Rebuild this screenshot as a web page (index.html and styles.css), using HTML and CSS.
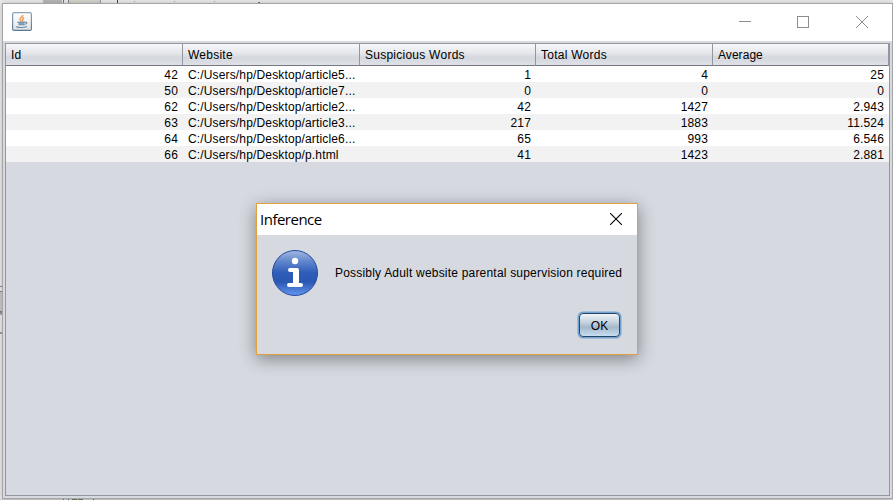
FILE: index.html
```html
<!DOCTYPE html>
<html lang="en">
<head>
<meta charset="utf-8">
<title>Inference</title>
<link rel="stylesheet" href="styles.css">
</head>
<body>
<svg class="backdrop" width="893" height="500" shape-rendering="crispEdges" aria-hidden="true">
  <rect width="893" height="500" fill="#ebebeb"/>
  <rect x="43" width="19" height="3" fill="#b9b9b9"/>
  <rect x="63" width="1" height="3" fill="#77777f"/>
  <rect x="68" width="33" height="3" fill="#d5d5cc"/>
  <rect x="68" width="1" height="3" fill="#85858d"/><rect x="100" width="1" height="3" fill="#999"/>
  <rect x="117" width="1" height="3" fill="#444"/>
  <path d="M134.500 1v1M174.500 1v1M214.500 1v1" stroke="#aaa"/>
  <rect x="258" y="2" width="2" height="1" fill="#77774d"/>
  <rect y="286" width="3" height="1" fill="#85858d"/><rect y="291" width="3" height="1" fill="#85858d"/>
  <rect y="292" width="2" height="19" fill="#c9c9c5"/>
  <rect y="311" width="3" height="2" fill="#85858d"/><rect y="313" width="3" height="2" fill="#aaa"/>
  <rect y="332" width="3" height="2" fill="#999"/>
  <rect y="499" width="893" height="1" fill="#cfcfcf"/>
  <path d="M63.500 498v2M68.500 498v2M93.500 498v2" stroke="#66666c"/>
  <path d="M72 499.500h5m1 0h5" stroke="#6c805a"/>
</svg>
<main class="window">
  <header class="titlebar">
    <svg class="java" width="20" height="19" viewBox="0 0 20 19">
      <defs><linearGradient id="tile" x2="0" y2="1"><stop stop-color="#fff"/><stop offset=".5" stop-color="#f3f3f3"/><stop offset="1" stop-color="#dcdfe2"/></linearGradient>
      <linearGradient id="edge" x2="0" y2="1"><stop stop-color="#91a3b4"/><stop offset="1" stop-color="#5d7a93"/></linearGradient></defs>
      <rect x=".6" y=".6" width="18.800" height="17.800" rx="1.500" fill="url(#tile)" stroke="url(#edge)" stroke-width="1.200"/>
      <path d="M10.800 3C11 5 7.500 5.600 8 7.300C8.200 8.200 9.400 8.500 9.300 9.500M12 5.500C9.800 6.500 11.600 7.700 10.400 9.200" fill="none" stroke="#f09a50" stroke-width="1.500"/>
      <path d="M5.500 9.800H13L12 12.800H7Z" fill="#8ba4b9"/>
      <path d="M5.500 10.200H13M13 10.200C16 9.500 15.300 12 12.500 12.300M6.500 12.700H12.500M4.500 14.200C3.500 15.800 12 16 15 14.500" fill="none" stroke="#6d8ca8" stroke-width="1.100"/>
    </svg>
    <svg class="controls" width="130" height="14" viewBox="0 0 130 14" fill="none" stroke="#8d8d8d">
      <path d="M0 6.500H12M58.500 1.500h11v11h-11z" shape-rendering="crispEdges"/>
      <path d="M117 1l12 12M129 1l-12 12"/>
    </svg>
  </header>
  <section class="pane">
    <table>
      <colgroup><col class="c177"><col class="c177"><col class="c176"><col class="c177"><col class="c176"></colgroup>
      <thead><tr><th>Id</th><th>Website</th><th>Suspicious Words</th><th>Total Words</th><th>Average</th></tr></thead>
      <tbody>
        <tr><td>42</td><td>C:/Users/hp/Desktop/article5...</td><td>1</td><td>4</td><td>25</td></tr>
        <tr><td>50</td><td>C:/Users/hp/Desktop/article7...</td><td>0</td><td>0</td><td>0</td></tr>
        <tr><td>62</td><td>C:/Users/hp/Desktop/article2...</td><td>42</td><td>1427</td><td>2.943</td></tr>
        <tr><td>63</td><td>C:/Users/hp/Desktop/article3...</td><td>217</td><td>1883</td><td>11.524</td></tr>
        <tr><td>64</td><td>C:/Users/hp/Desktop/article6...</td><td>65</td><td>993</td><td>6.546</td></tr>
        <tr><td>66</td><td>C:/Users/hp/Desktop/p.html</td><td>41</td><td>1423</td><td>2.881</td></tr>
      </tbody>
    </table>
  </section>
</main>
<div class="dialog" role="dialog">
  <div class="dialog-title"><span>Inference</span>
    <svg width="12" height="12" viewBox="0 0 12 12" stroke="#000" stroke-width="1.100"><path d="M0 0L12 12M12 0L0 12"/></svg>
  </div>
  <div class="message">
    <svg width="46" height="46" viewBox="0 0 46 46">
      <defs><linearGradient id="ball" x2="0" y2="1"><stop stop-color="#a3b8e3"/><stop offset=".25" stop-color="#5f84cb"/><stop offset=".5" stop-color="#2d5db8"/><stop offset=".7" stop-color="#2a58b2"/><stop offset="1" stop-color="#6496f0"/></linearGradient></defs>
      <circle cx="23" cy="23" r="22.500" fill="url(#ball)" stroke="#24499c"/>
      <circle cx="23" cy="11" r="3.200" fill="#fff"/>
      <path d="M18 20h7v15M17 35h12" fill="none" stroke="#fff" stroke-width="4" stroke-linecap="round" stroke-linejoin="round"/>
      <path d="M21 22h6v13h-6z" fill="#fff"/>
    </svg>
    <p>Possibly Adult website parental supervision required</p>
  </div>
  <div class="actions"><button>OK</button></div>
</div>
</body>
</html>
```
FILE: styles.css
```css
* { box-sizing: border-box; }
body {
  margin: 0;
  height: 500px;
  overflow: hidden;
  position: relative;
  font: 12px/16px "Liberation Sans", Arial, sans-serif;
  color: #000;
}
.backdrop { position: absolute; left: 0; top: 0; }
.window {
  position: absolute;
  left: 2px;
  top: 3px;
  width: 891px;
  height: 496px;
  border: 1px solid #a5a5a8;
  background: #d6d9e0;
  box-shadow: 0 0 6px rgba(0, 0, 0, .2);
}
.titlebar {
  height: 37px;
  padding: 0 23px 0 9px;
  display: flex;
  align-items: center;
  justify-content: space-between;
  background: #fff;
}
.java { margin-bottom: 2px; }
.controls { margin-bottom: 1px; }
.pane {
  width: 885px;
  height: 453px;
  margin: 2px 0 0 2px;
  border: 1px solid #9297a1;
}
table { width: 883px; table-layout: fixed; border-collapse: separate; border-spacing: 0; }
.c177 { width: 177px; }
.c176 { width: 176px; }
th, td { padding: 0 5px; white-space: nowrap; }
th {
  height: 22px;
  text-align: left;
  font-weight: normal;
  line-height: 20px;
  letter-spacing: .25px;
  border-right: 1px solid #92979f;
  border-bottom: 1px solid #737881;
  background: linear-gradient(#f6f7f9 0, #e6e8ec 40%, #d4d7de 65%, #dfe1e7 100%);
}
th:last-child { letter-spacing: .05px; }
td {
  height: 16px;
  padding-top: 2px;
  line-height: 14px;
  letter-spacing: .15px;
  text-align: right;
  background: #fff;
}
td:nth-child(2) { text-align: left; }
tr:nth-child(even) td { background: #f2f2f2; }
.dialog {
  position: absolute;
  left: 256px;
  top: 203px;
  width: 382px;
  height: 152px;
  border: 1px solid #e2a03c;
  background: #d6d9e0;
  box-shadow: 0 4px 16px rgba(0, 0, 0, .4);
}
.dialog-title {
  height: 31px;
  padding: 0 15px 0 3px;
  display: flex;
  align-items: center;
  justify-content: space-between;
  background: #fff;
  font: 15px/31px "Open Sans", "Noto Sans", sans-serif;
  letter-spacing: -.5px;
}
.dialog-title svg { margin-bottom: 1px; }
.message { display: flex; align-items: center; gap: 17px; padding: 15px 0 0 15px; }
.message p { margin: 0; white-space: nowrap; letter-spacing: .2px; }
.actions { display: flex; justify-content: flex-end; padding: 17px 17px 0 0; }
button {
  width: 41px;
  height: 24px;
  padding: 1px 0 0;
  font: inherit;
  color: #000;
  border: 1px solid #2b4660;
  border-radius: 4px;
  background: linear-gradient(#f0f4f8 0, #bccbd9 45%, #a3b8cb 60%, #c8dff1 100%);
  box-shadow: 0 0 0 1.500px #73a4d1;
}
```
